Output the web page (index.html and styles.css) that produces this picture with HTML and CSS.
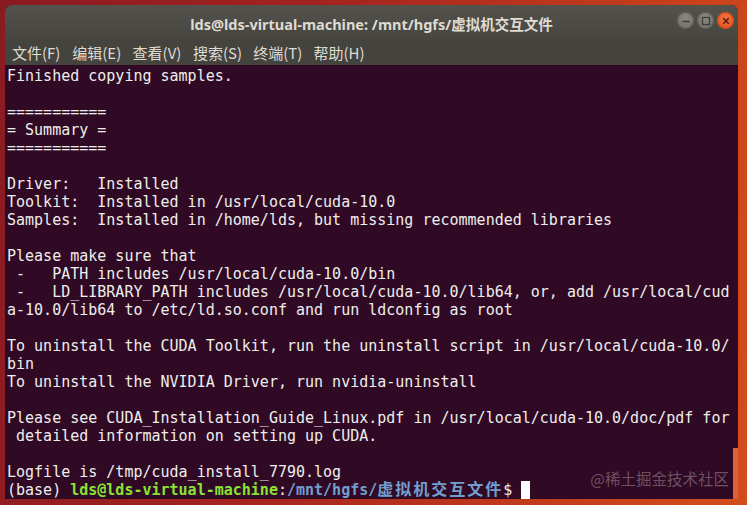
FILE: index.html
```html
<!DOCTYPE html>
<html>
  <head>
    <title>Terminal</title>
    <meta charset="utf-8">
    <link rel="stylesheet" href="styles.css">
  </head>
<body>
  <div class="window">
    <div class="titlebar">
      <span class="title">lds@lds-virtual-machine: /mnt/hgfs/虚拟机交互文件</span>
      <div class="controls">
        <span class="btn min"><svg width="16" height="16" viewBox="0 0 16 16"><path d="M4.5 8.5h7" stroke="#3a3935" stroke-width="1.4"/></svg></span>
        <span class="btn max"><svg width="16" height="16" viewBox="0 0 16 16"><rect x="4.5" y="4.5" width="7" height="7" fill="none" stroke="#3a3935" stroke-width="1.2"/></svg></span>
        <span class="btn close"><svg width="16" height="16" viewBox="0 0 16 16"><path d="M5.3 5.3l5.4 5.4M10.7 5.3l-5.4 5.4" stroke="#5a1a08" stroke-width="1.4"/></svg></span>
      </div>
    </div>
    <div class="menubar">
      <span>文件(F)</span>
      <span>编辑(E)</span>
      <span>查看(V)</span>
      <span>搜索(S)</span>
      <span>终端(T)</span>
      <span>帮助(H)</span>
    </div>
    <div class="terminal">
<pre class="screen">Finished copying samples.

===========
= Summary =
===========

Driver:   Installed
Toolkit:  Installed in /usr/local/cuda-10.0
Samples:  Installed in /home/lds, but missing recommended libraries

Please make sure that
 -   PATH includes /usr/local/cuda-10.0/bin
 -   LD_LIBRARY_PATH includes /usr/local/cuda-10.0/lib64, or, add /usr/local/cud
a-10.0/lib64 to /etc/ld.so.conf and run ldconfig as root

To uninstall the CUDA Toolkit, run the uninstall script in /usr/local/cuda-10.0/
bin
To uninstall the NVIDIA Driver, run nvidia-uninstall

Please see CUDA_Installation_Guide_Linux.pdf in /usr/local/cuda-10.0/doc/pdf for
 detailed information on setting up CUDA.

Logfile is /tmp/cuda_install_7790.log
(base) <b class="user">lds@lds-virtual-machine</b>:<b class="path">/mnt/hgfs/</b><b class="path cjk">虚拟机交互文件</b>$ <span class="cursor"> </span></pre>
      <div class="scroll"><div class="thumb"></div></div>
    </div>
  </div>
  <div class="mark">@稀土掘金技术社区</div>
</body>
</html>
```

FILE: styles.css
```css
* { margin: 0; padding: 0; box-sizing: border-box; }
html, body { width: 747px; height: 505px; overflow: hidden; }
body { background: linear-gradient(100deg, #8a1a22 0%, #a4241f 40%, #c63f1b 80%, #d34e1c 100%); position: relative; }

.window { margin: 5px 0 0 5px; width: 733px; height: 494px; border-radius: 7px 7px 0 0; overflow: hidden; display: flex; flex-direction: column; background: #300a24; }

.titlebar { height: 35px; flex-shrink: 0; display: flex; align-items: center; justify-content: center; position: relative; background: linear-gradient(#53524d, #46453f); }
.title { font-family: "Noto Sans", "Noto Sans CJK SC", sans-serif; font-weight: bold; font-size: 14.5px; color: #dfdbd2; margin-top: 1px; }
.controls { position: absolute; right: 4px; top: 7px; display: flex; gap: 3px; }
.btn { width: 17px; height: 17px; border-radius: 50%; display: flex; align-items: center; justify-content: center; }
.btn.min, .btn.max { background: radial-gradient(circle at 50% 35%, #8a8882, #6c6a64); box-shadow: inset 0 0 0 1px #5e5c57; }
.btn.close { background: radial-gradient(circle at 50% 35%, #f2703d, #e2501c); box-shadow: inset 0 0 0 1px #c3461a; }

.menubar { height: 25px; flex-shrink: 0; display: flex; align-items: center; padding-left: 7px; background: #44433e; font-family: "Noto Sans CJK SC", "Noto Sans", sans-serif; font-size: 15px; color: #dfdbd2; }
.menubar span { width: 60.3px; white-space: nowrap; margin-top: -1px; }

.terminal { flex: 1; min-height: 0; display: flex; }
.screen { flex: 1; padding: 2px 0 0 2px; font-family: "DejaVu Sans Mono", "Noto Sans CJK SC", monospace; font-size: 15px; line-height: 18px; color: #eeeeec; white-space: pre; overflow: hidden; }
.user { color: #8ae234; }
.path { color: #729fcf; }
.cjk { font-family: "Noto Sans CJK SC", sans-serif; font-size: 16px; letter-spacing: 2px; line-height: 0; }
.cursor { display: inline-block; width: 9px; height: 18px; background: #ffffff; vertical-align: top; }

.scroll { width: 5px; display: flex; flex-direction: column; justify-content: flex-end; }
.thumb { height: 51px; background: #e06038; }

.mark { position: absolute; right: 18px; bottom: 16px; font-family: "Noto Sans CJK SC", sans-serif; font-size: 15.5px; color: rgba(190, 170, 185, 0.45); }
```
